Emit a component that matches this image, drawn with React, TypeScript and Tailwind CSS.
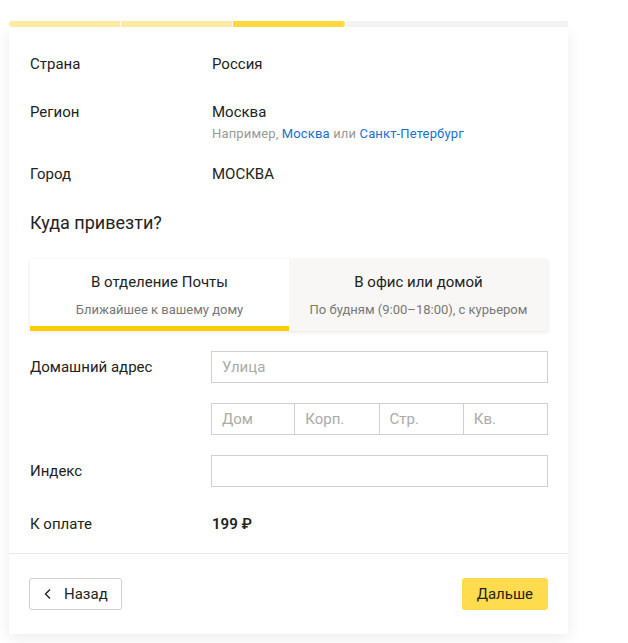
const Row = ({ label, children, className = "" }: { label: string; children: React.ReactNode; className?: string }) => (
  <div className={`flex ${className}`}>
    <div className="w-[182px] shrink-0 text-[15px] leading-5 text-[#222]">{label}</div>
    <div className="flex-1 text-[15px] leading-5 text-[#222]">{children}</div>
  </div>
)

const Field = ({ placeholder = "", className = "" }: { placeholder?: string; className?: string }) => (
  <input
    placeholder={placeholder}
    className={`h-8 border border-[#d0d0d0] px-[10px] text-[15px] text-[#222] placeholder:text-[#aaa] outline-none bg-white ${className}`}
  />
)

export default function App() {
  return (
    <div className="w-full h-[643px] bg-white pt-[21px] pl-[9px] font-['Roboto',sans-serif]">
      <div className="w-[559px]">
        <div className="flex gap-px h-[6px]">
          <div className="flex-1 bg-[#ffeaa6] rounded-l-[3px]" />
          <div className="flex-1 bg-[#ffeaa6]" />
          <div className="flex-1 bg-[#ffd83f] rounded-r-[3px]" />
          <div className="flex-[2] bg-[#f3f3f3]" />
        </div>
        <div className="bg-white shadow-[0_4px_14px_rgba(0,0,0,0.08)]">
          <div className="pl-[21px] pr-[20px] pt-[27px]">
            <Row label="Страна">Россия</Row>
            <Row label="Регион" className="mt-[28px]">
              <div>Москва</div>
              <div className="mt-[3px] text-[13px] leading-[18px] tracking-[0.15px] text-[#999]">
                Например, <span className="text-[#1a6fd0]">Москва</span> или{" "}
                <span className="text-[#1a6fd0]">Санкт-Петербург</span>
              </div>
            </Row>
            <Row label="Город" className="mt-[21px]">МОСКВА</Row>
            <div className="mt-[27px] text-[18px] leading-6 text-[#222]">Куда привезти?</div>

            <div className="mt-[24px] flex h-[72px] shadow-[0_1px_4px_rgba(0,0,0,0.1)]">
              <div className="flex-1 flex flex-col items-center bg-white border-b-[5px] border-[#ffcc00]">
                <div className="mt-[13px] text-[15px] leading-5 text-[#222]">В отделение Почты</div>
                <div className="mt-[9px] text-[13px] leading-[18px] text-[#777]">Ближайшее к вашему дому</div>
              </div>
              <div className="flex-1 flex flex-col items-center bg-[#f9f7f5]">
                <div className="mt-[13px] text-[15px] leading-5 text-[#222]">В офис или домой</div>
                <div className="mt-[9px] text-[13px] leading-[18px] text-[#777]">По будням (9:00–18:00), с курьером</div>
              </div>
            </div>

            <div className="mt-[20px] flex items-center">
              <div className="w-[181px] shrink-0 text-[15px] text-[#222]">Домашний адрес</div>
              <Field placeholder="Улица" className="flex-1" />
            </div>
            <div className="mt-[20px] flex">
              <div className="w-[181px] shrink-0" />
              <div className="flex-1 grid grid-cols-4">
                <Field placeholder="Дом" className="w-full" />
                <Field placeholder="Корп." className="w-full border-l-0" />
                <Field placeholder="Стр." className="w-full border-l-0" />
                <Field placeholder="Кв." className="w-full border-l-0" />
              </div>
            </div>
            <div className="mt-[20px] flex items-center">
              <div className="w-[181px] shrink-0 text-[15px] text-[#222]">Индекс</div>
              <Field className="flex-1" />
            </div>
            <div className="mt-[27px] flex items-center pb-[19px]">
              <div className="w-[182px] shrink-0 text-[15px] leading-5 text-[#222]">К оплате</div>
              <div className="text-[15px] leading-5 font-semibold text-[#222]">199 ₽</div>
            </div>
          </div>
          <div className="border-t border-[#e8e8e8]" />
          <div className="pl-[20px] pr-[20px] pt-[24px] pb-[24px] flex justify-between">
            <button className="h-8 pl-[14px] pr-[13px] flex items-center gap-[12px] border border-[#d0d0d0] rounded-[3px] bg-white text-[15px] text-[#222]">
              <svg width="8" height="12" viewBox="0 0 8 12" fill="none">
                <path d="M6 1.5L1.5 6L6 10.5" stroke="#222" strokeWidth="1.4" />
              </svg>
              Назад
            </button>
            <button className="h-8 px-[15px] rounded-[3px] bg-[#ffdb4d] text-[15px] text-[#222]">Дальше</button>
          </div>
        </div>
      </div>
    </div>
  )
}
